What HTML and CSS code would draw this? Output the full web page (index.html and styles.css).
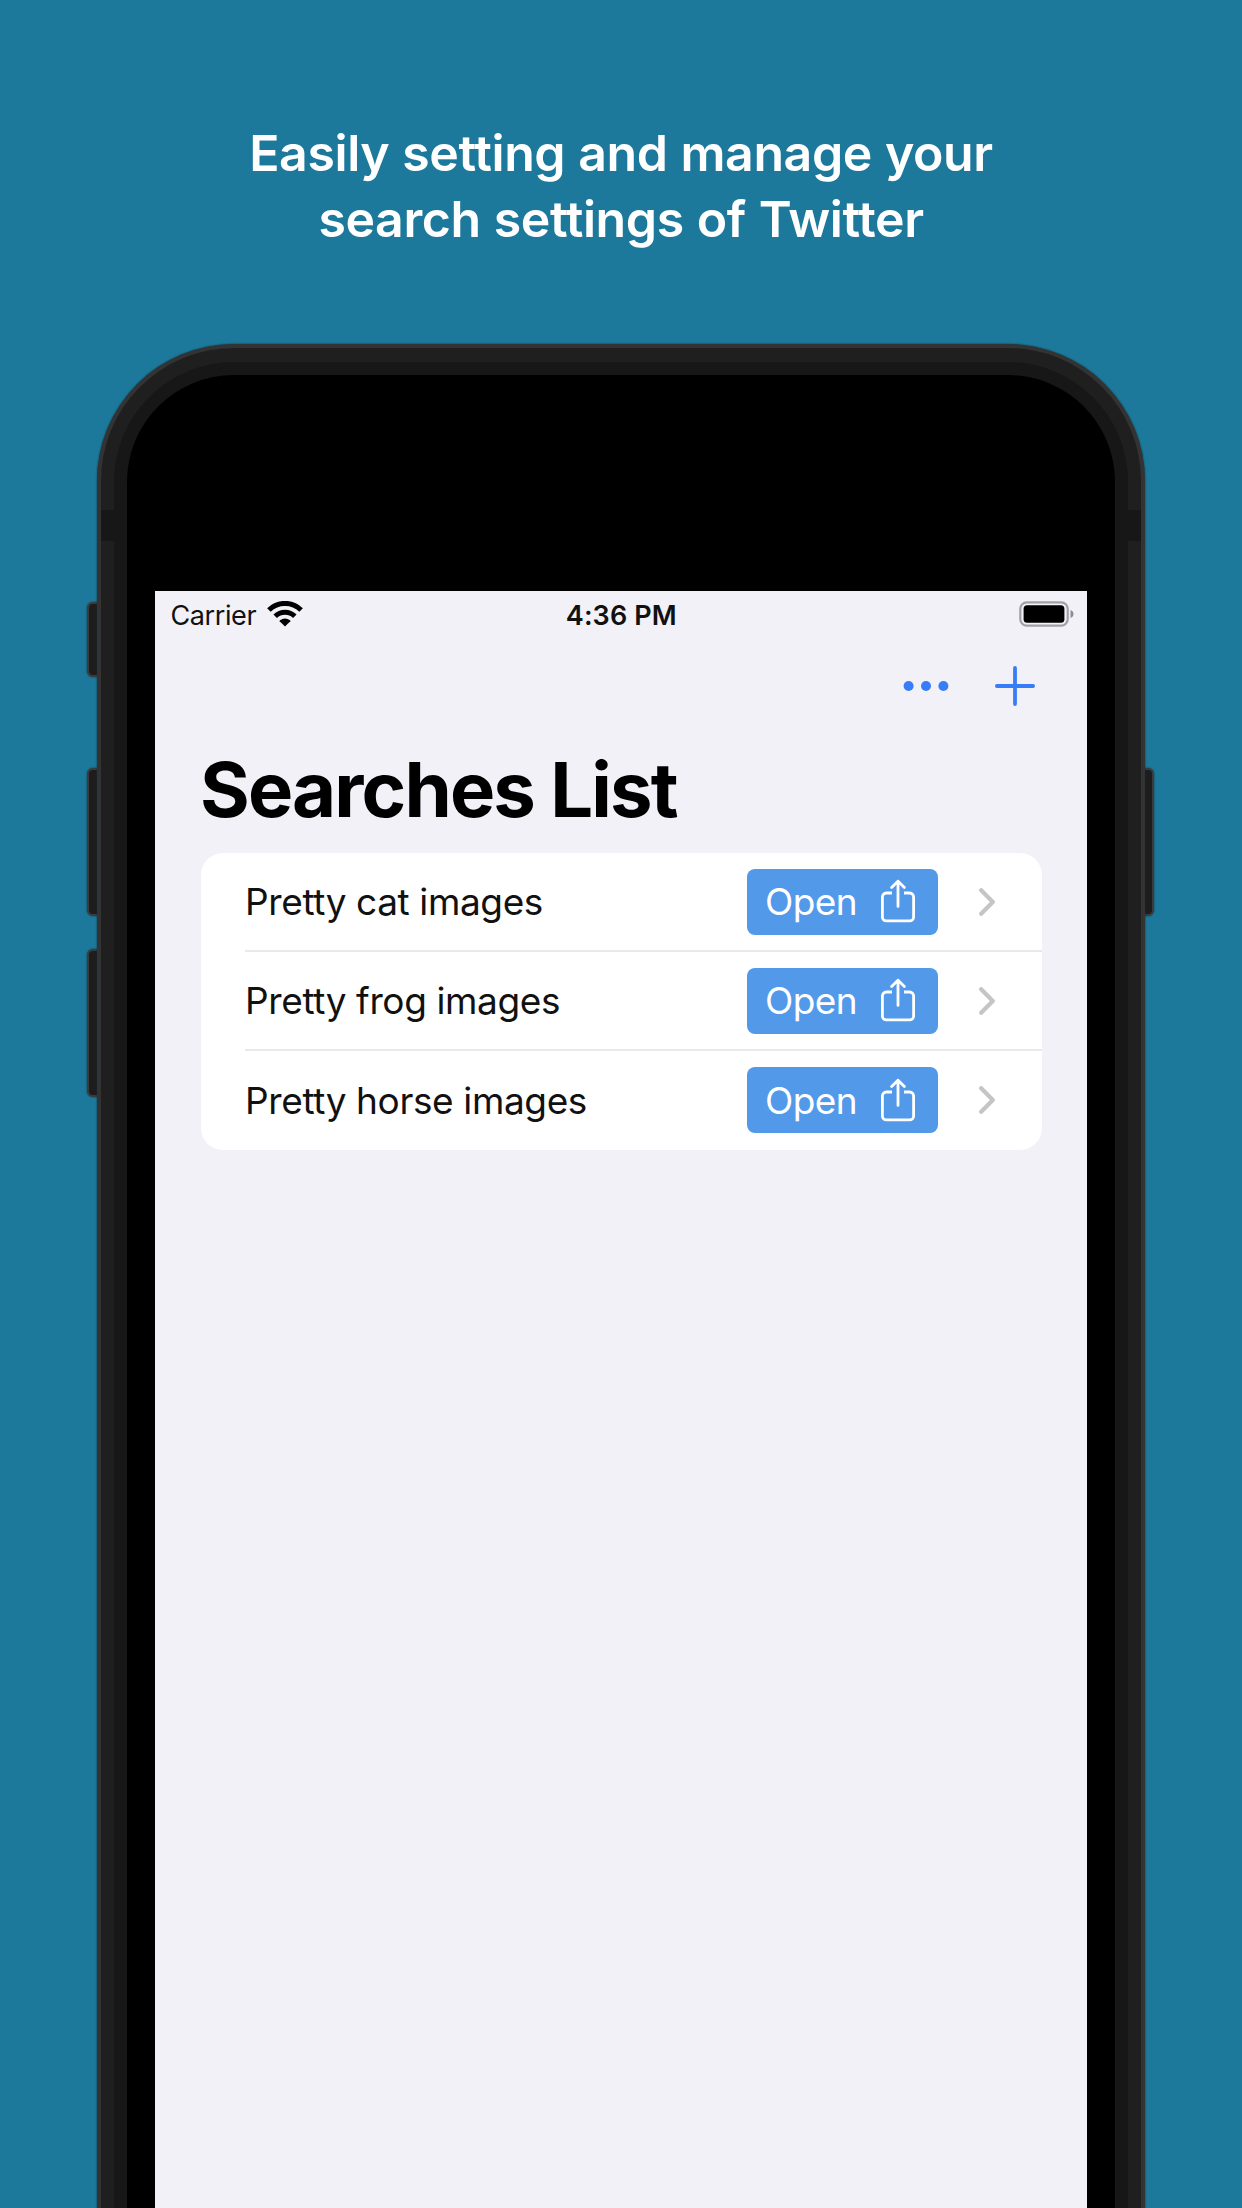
FILE: index.html
```
<!DOCTYPE html>
<html lang="en">
<head>
<meta charset="utf-8">
<title>Searches List</title>
<link rel="stylesheet" href="styles.css">
</head>
<body>
<svg class="sprite" aria-hidden="true">
  <symbol id="share" viewBox="0 0 34 44">
    <g fill="none" stroke="currentColor" stroke-width="2.8" stroke-linecap="round" stroke-linejoin="round">
      <path d="M11 14H5.3a3.9 3.9 0 0 0-3.9 3.9V38a3.9 3.9 0 0 0 3.9 3.9h23.4a3.9 3.9 0 0 0 3.9-3.9V17.9a3.9 3.9 0 0 0-3.9-3.9H23" stroke-linecap="butt"/>
      <path d="M17 27.4V2.2M10.6 8.6L17 2.2l6.400 6.400"/>
    </g>
  </symbol>
  <symbol id="chevron" viewBox="0 0 16 28">
    <path d="M2.200 2.200L13.800 14L2.200 25.800" fill="none" stroke="currentColor" stroke-width="4.200" stroke-linecap="round" stroke-linejoin="round"/>
  </symbol>
</svg>
<main class="page">
  <h1 class="headline">Easily setting and manage your<br>search settings of Twitter</h1>
  <div class="phone">
    <i class="key key-mute"></i>
    <i class="key key-up"></i>
    <i class="key key-down"></i>
    <i class="key key-power"></i>
    <div class="frame">
      <i class="seam seam-left"></i>
      <i class="seam seam-right"></i>
      <div class="bezel">
        <div class="glass">
          <div class="screen">
            <div class="status">
              <div class="carrier">
                <span>Carrier</span>
                <svg class="wifi" viewBox="0 0 36 26">
                  <g fill="none" stroke="#000">
                    <path d="M1.900 9A22.900 22.900 0 0 1 34.100 9" stroke-width="5"/>
                    <path d="M8.200 15.200A14 14 0 0 1 27.800 15.200" stroke-width="5"/>
                  </g>
                  <path d="M18 25.400L12.700 20.200Q12.500 19.700 13 19.300Q18 15.700 23 19.300Q23.500 19.700 23.300 20.200Z"/>
                </svg>
              </div>
              <span class="time">4:36 PM</span>
              <svg class="battery" viewBox="0 0 55 26">
                <rect x="1.300" y="1.300" width="47.400" height="23.400" rx="6.500" fill="none" stroke="#a1a1a5" stroke-width="2.200"/>
                <rect x="4.600" y="4.200" width="40.800" height="17.600" rx="3.500"/>
                <path d="M51.500 9q3 1.200 3 4t-3 4z" fill="#8e8e92"/>
              </svg>
            </div>
            <div class="toolbar">
              <svg class="more" viewBox="0 0 46 12" fill="#377df7"><circle cx="5.600" cy="6" r="5"/><circle cx="23" cy="6" r="5"/><circle cx="40.400" cy="6" r="5"/></svg>
              <svg class="plus" viewBox="0 0 40 40"><path d="M20 1.900V38.100M1.900 20H38.100" stroke="#377df7" stroke-width="3.800" stroke-linecap="round"/></svg>
            </div>
            <h2 class="title">Searches List</h2>
            <ul class="list">
              <li class="row"><span class="name">Pretty cat images</span><span class="open">Open<svg class="share"><use href="#share"/></svg></span><svg class="chevron"><use href="#chevron"/></svg></li>
              <li class="row"><span class="name">Pretty frog images</span><span class="open">Open<svg class="share"><use href="#share"/></svg></span><svg class="chevron"><use href="#chevron"/></svg></li>
              <li class="row"><span class="name">Pretty horse images</span><span class="open">Open<svg class="share"><use href="#share"/></svg></span><svg class="chevron"><use href="#chevron"/></svg></li>
            </ul>
          </div>
        </div>
      </div>
    </div>
  </div>
</main>
</body>
</html>
```

FILE: styles.css
```
* { box-sizing: border-box; margin: 0; padding: 0; }
body { background: #1d799b; font-family: Inter, "Liberation Sans", sans-serif; }
svg { display: block; flex: none; }
.sprite { position: absolute; width: 0; height: 0; }
.page { height: 2208px; overflow: hidden; display: flex; flex-direction: column; align-items: center; padding-top: 120px; }
.headline { color: #fff; font-size: 50px; line-height: 66px; font-weight: 600; letter-spacing: -.4px; word-spacing: .8px; text-align: center; }

.phone { position: relative; flex: none; width: 1048px; height: 2000px; margin-top: 92px; }
.frame { position: relative; height: 100%; padding: 14px 13px 0; border: 4px solid #333; border-bottom: 0; border-radius: 137px 137px 0 0; background: #1f1f1f; box-shadow: 0 0 2px #10303c; }
.bezel { height: 100%; padding: 13px 13px 0; border-radius: 120px 120px 0 0; background: #171717; }
.glass { height: 100%; padding: 216px 28px 0; border-radius: 107px 107px 0 0; background: #000; }
.seam { position: absolute; top: 162px; width: 13px; height: 31px; background: #171717; }
.seam-left { left: 0; }
.seam-right { right: 0; }
.key { position: absolute; left: -10px; width: 14px; border: 2px solid #3b3b3b; border-radius: 6px 0 0 6px; background: #1d1d1d; box-shadow: 0 0 2px #18333d; }
.key-mute { top: 258px; height: 75px; }
.key-up { top: 424px; height: 148px; }
.key-down { top: 605px; height: 148px; }
.key-power { left: auto; right: -9px; top: 424px; height: 148px; border-radius: 0 6px 6px 0; }

.screen { height: 100%; background: #f2f1f8; color: #000; }
.status { display: grid; grid-template-columns: 1fr auto 1fr; align-items: center; height: 48px; padding: 0 13px 0 15.500px; }
.carrier { display: flex; align-items: center; gap: 11px; font-size: 27px; letter-spacing: -.4px; color: #111; }
.wifi { width: 36px; height: 26px; margin-top: -3px; }
.time { margin-left: -2px; font-size: 27px; font-weight: 600; letter-spacing: .1px; color: #111; }
.battery { width: 55px; height: 26px; justify-self: end; margin-top: -3px; }
.toolbar { display: flex; justify-content: flex-end; align-items: center; gap: 46px; height: 94px; padding-right: 52px; }
.more { width: 46px; height: 12px; }
.plus { width: 40px; height: 40px; }
.title { height: 112px; padding-left: 45px; font-size: 76px; line-height: 112px; font-weight: 700; letter-spacing: -1.850px; }
.list { list-style: none; margin: 7.500px 45.500px 0 46px; border-radius: 22px; background: #fff; overflow: hidden; }
.row { display: flex; align-items: center; height: 99px; margin-left: 44px; padding-right: 46.500px; }
.row:not(:last-child) { padding-top: 1px; border-bottom: 2px solid #e9e9eb; }
.name { flex: 1; font-size: 37px; letter-spacing: -.38px; color: #111; }
.open { display: flex; align-items: center; justify-content: space-between; width: 191px; height: 66px; padding: 0 23px 0 18px; border-radius: 8px; background: #5399ea; color: #fff; font-size: 37px; font-weight: 400; letter-spacing: -.6px; }
.share { width: 34px; height: 44px; margin-top: -1px; }
.chevron { width: 16px; height: 28px; margin-left: 41px; color: #c5c5c7; }
```
